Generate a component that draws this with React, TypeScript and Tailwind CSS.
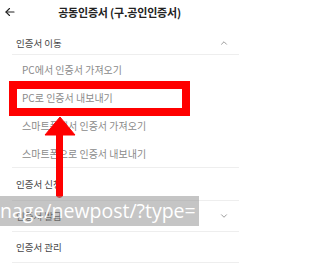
import { ChevronDown, ChevronUp } from 'lucide-react';

const moveItems = [
  'PC에서 인증서 가져오기',
  'PC로 인증서 내보내기',
  '스마트폰에서 인증서 가져오기',
  '스마트폰으로 인증서 내보내기',
];

const App = () => {
  return (
    <div
      className="relative w-[239px] h-[266px] bg-white overflow-hidden"
      style={{ fontFamily: '"Noto Sans CJK KR", "Noto Sans", sans-serif' }}
    >
      {/* Header */}
      <div className="relative h-6 flex items-center justify-center">
        <svg className="absolute left-[4px] top-[6px]" width="12" height="12" viewBox="0 0 24 24" fill="none" stroke="#222" strokeWidth="2.2" strokeLinecap="round" strokeLinejoin="round">
          <path d="M20 12H4" />
          <path d="M11 5l-7 7 7 7" />
        </svg>
        <span className="text-[11px] font-semibold text-[#222] tracking-[-0.2px]">공동인증서 (구.공인인증서)</span>
      </div>

      {/* Accordion */}
      <div className="ml-3">
        <div className="h-[31px] pt-2 pl-1 pr-[10px] flex items-center justify-between border-b border-[#eeeeee]">
          <span className="text-[9.5px] text-[#444]">인증서 이동</span>
          <ChevronUp className="w-[10px] h-[10px] text-[#888]" strokeWidth={2} />
        </div>
        <div className="flex flex-col border-b border-[#eeeeee]">
          {moveItems.map((item) => (
            <div key={item} className="h-7 pl-[10px] flex items-center">
              <span className="text-[10px] text-[#8a8a8a]">{item}</span>
            </div>
          ))}
        </div>
        <div className="h-[33px] pl-1 flex items-center border-b border-[#eeeeee]">
          <span className="text-[9.5px] text-[#444]">인증서 신청</span>
        </div>
        <div className="h-[31px] pl-1 pr-[10px] flex items-center justify-between border-b border-[#eeeeee]">
          <span className="text-[9.5px] text-[#444]">인증서 발급</span>
          <ChevronDown className="w-[10px] h-[10px] text-[#888]" strokeWidth={2} />
        </div>
        <div className="h-[31px] pl-1 flex items-center border-b border-[#eeeeee]">
          <span className="text-[9.5px] text-[#444]">인증서 관리</span>
        </div>
      </div>

      {/* Highlight box */}
      <div className="absolute left-[9px] top-[81px] w-[181px] h-[35px] border-[8px] border-[#ff0000]" />

      {/* Arrow */}
      <svg className="absolute left-0 top-0" width="239" height="266" viewBox="0 0 239 266">
        <path d="M56 134 L63 134 L63 196 Q59.5 200 56 196 Z" fill="#ff0000" />
        <path d="M60 117 L75 135 L45 135 Z" fill="#ff0000" stroke="#ff0000" strokeWidth="1" strokeLinejoin="round" />
      </svg>

      {/* URL overlay */}
      <div className="absolute left-0 top-[196px] w-[199px] h-[30px] bg-[rgba(140,140,140,0.5)] flex items-center overflow-hidden">
        <span className="text-[19.5px] leading-none text-white whitespace-nowrap" style={{ fontFamily: '"Open Sans", sans-serif' }}>
          nage/newpost/?type=
        </span>
      </div>
    </div>
  );
};

export default App;
